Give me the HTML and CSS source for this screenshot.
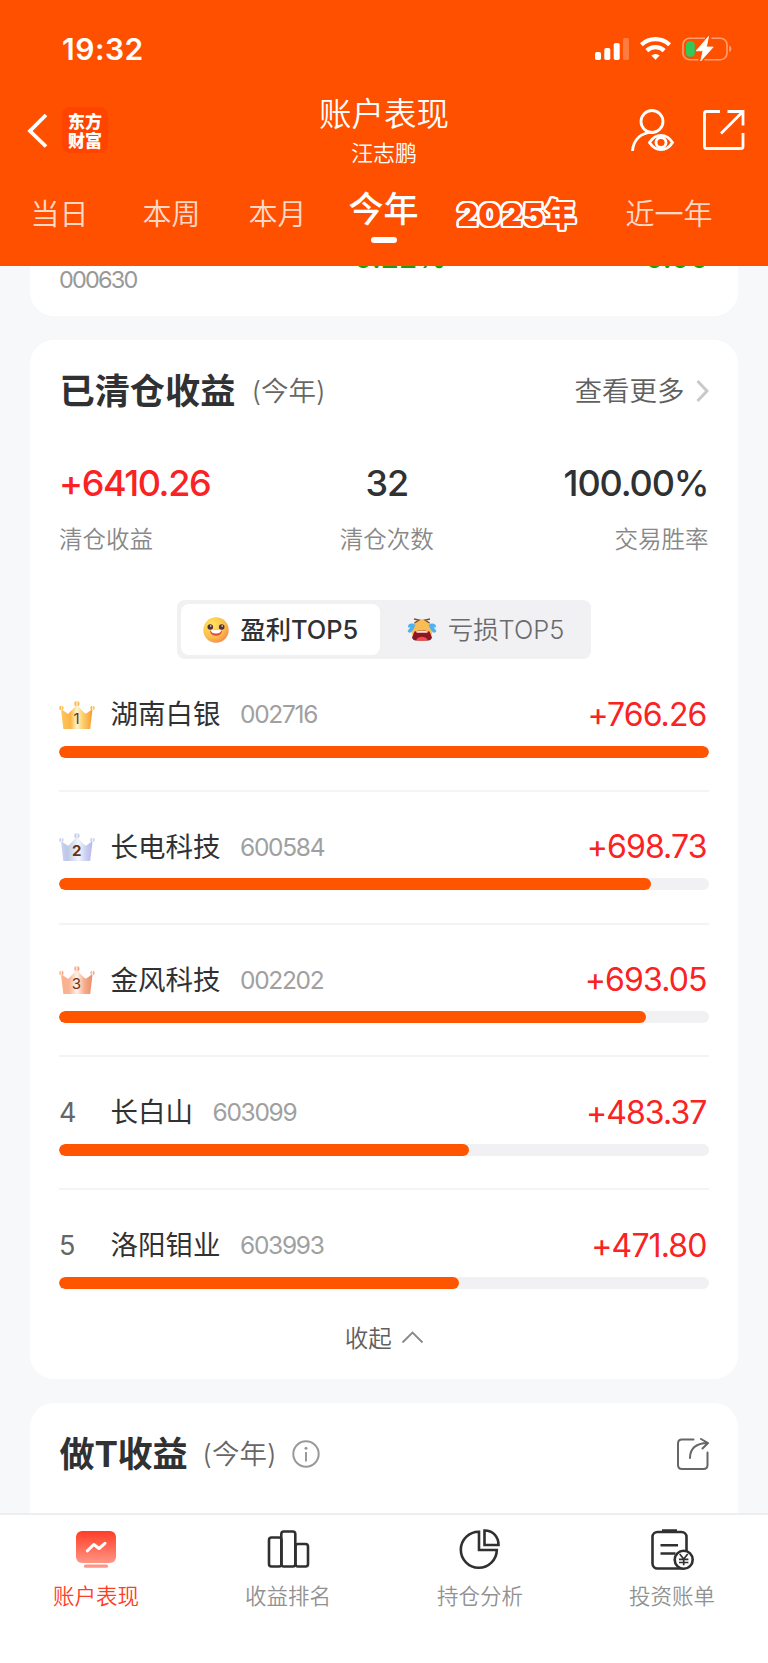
FILE: index.html
```html
<!DOCTYPE html>
<html lang="zh-CN">
<head>
<meta charset="utf-8">
<title>账户表现</title>
<link rel="stylesheet" href="styles.css">
</head>
<body>
<div class="screen">
  <header class="header">
    <div class="status">
      <span class="clock">19:32</span>
      <svg class="status-icons" width="140" height="30" viewBox="592 34 140 30">
        <g fill="#fff">
          <rect x="595" y="52" width="6" height="8" rx="1.8"/>
          <rect x="604.3" y="48" width="6" height="12" rx="1.8"/>
          <rect x="613.7" y="43" width="6" height="17" rx="1.8"/>
          <rect x="623" y="38" width="6" height="22" rx="1.8" opacity=".25"/>
          <path d="M655.500 59.800l-4.200-4.200a6.300 6.300 0 0 1 8.400 0z"/>
        </g>
        <g fill="none" stroke="#fff" stroke-width="4.200">
          <path d="M641.400 44.700a20.500 20.500 0 0 1 28.200 0"/>
          <path d="M646.800 50.600a12.800 12.800 0 0 1 17.400 0"/>
        </g>
        <path d="M705 38.200h-15.500a6.500 6.500 0 0 0-6.500 6.500v8.500a6.500 6.500 0 0 0 6.500 6.500h9M711.500 38.200h9a6.500 6.500 0 0 1 6.500 6.500v8.500a6.500 6.500 0 0 1-6.500 6.500h-16" fill="none" stroke="#fff" stroke-opacity=".45" stroke-width="1.600"/>
        <path d="M729.300 45.300a4 4 0 0 1 0 7z" fill="#fff" fill-opacity=".5"/>
        <rect x="686" y="41.300" width="8.800" height="15.400" rx="4" fill="#34c759"/>
        <path d="M708.500 36.500l-12.300 14.300h6.800l-2.300 10.200 12.500-14h-6.800z" fill="#fff" stroke="#fff" stroke-width=".8" stroke-linejoin="round"/>
      </svg>
    </div>
    <div class="nav">
      <svg class="back" width="24" height="40" viewBox="0 0 24 40"><path d="M21 4L5 20l16 15.500" fill="none" stroke="#fff" stroke-width="3.800"/></svg>
      <div class="logo">东方<br>财富</div>
      <div class="heading">
        <h1>账户表现</h1>
        <p>汪志鹏</p>
      </div>
      <svg class="nav-icons" width="116" height="46" viewBox="630 106 116 46" fill="none" stroke="#fff" stroke-width="2.800">
        <circle cx="652" cy="121.500" r="11"/>
        <path d="M632.500 151c1-12 9-18.500 19.500-18.700"/>
        <path d="M649.500 142.500c6-9.500 17-9.500 23 0c-6 9.500-17 9.500-23 0z"/>
        <circle cx="661" cy="142.500" r="5"/>
        <path d="M720.500 111.500h-13.500q-2 0-2 2v33q0 2 2 2h34.500q2 0 2-2v-13.500M728 111.500h15.500v14M743 112l-21.500 21.500" transform="translate(-.5 0)"/>
      </svg>
    </div>
    <nav class="periods">
      <span class="p1">当日</span>
      <span class="p2">本周</span>
      <span class="p3">本月</span>
      <span class="p4 on">今年</span>
      <span class="p5 outlined">2025年</span>
      <span class="p6">近一年</span>
    </nav>
  </header>

  <main class="content">
    <section class="card holding">
      <span class="holding-rate">-0.22%</span>
      <span class="holding-price">0.00</span>
      <span class="holding-code">000630</span>
    </section>

    <section class="card cleared">
      <div class="card-head">
        <h2>已清仓收益</h2><span class="range">(今年)</span>
        <span class="more">查看更多</span>
        <svg width="13" height="24" viewBox="0 0 13 24"><path d="M1.500 2l9.500 10-9.500 10" fill="none" stroke="#c9c9c9" stroke-width="3"/></svg>
      </div>
      <div class="stats">
        <div><b class="up">+6410.26</b><span>清仓收益</span></div>
        <div class="mid"><b>32</b><span>清仓次数</span></div>
        <div class="end"><b>100.00%</b><span>交易胜率</span></div>
      </div>
      <div class="toggle">
        <div class="opt active">
          <svg width="26" height="26" viewBox="0 0 26 26">
            <defs><radialGradient id="face" cx=".35" cy=".3" r=".8"><stop offset="0" stop-color="#ffe65c"/><stop offset=".6" stop-color="#fcc04a"/><stop offset="1" stop-color="#f4824c"/></radialGradient></defs>
            <circle cx="13" cy="13" r="12.700" fill="url(#face)"/>
            <circle cx="7.300" cy="10" r="2.800" fill="#54303a"/><circle cx="18.700" cy="10" r="2.800" fill="#54303a"/>
            <circle cx="7.800" cy="9" r=".8" fill="#fff"/><circle cx="19.200" cy="9" r=".8" fill="#fff"/>
            <path d="M7 13.500h12c0 7-12 7-12 0z" fill="#e8503a"/><path d="M7.500 13h11q-1 3.500-5.500 3.500t-5.500-3.500z" fill="#fff"/>
          </svg>
          <span>盈利TOP5</span>
        </div>
        <div class="opt">
          <svg width="30" height="26" viewBox="0 0 30 26">
            <circle cx="15" cy="13" r="10.700" fill="#f9bd55"/>
            <path d="M7.500 14.500q7.500-2 15 0l2.500 6q-1 3-3.500 3h-13q-2.500 0-3.500-3z" fill="#8e1524"/>
            <path d="M9.500 22q5.500-4.500 11 0l-.5 1.500h-10z" fill="#f04b4b"/><path d="M9 14.300q6-1.300 12 0l-.7 1.400H9.700z" fill="#ffe9d9"/>
            <path d="M7 2l5 1-4.500 3M23 2l-5 1 4.500 3" fill="none" stroke="#7d4a3a" stroke-width="1.300"/>
            <path d="M8.500 8C5 5 .5 6.500 1 10.500l2.500-.3L.5 14q1.500 3 3.800 1Q7 12 8.500 8zM21.500 8C25 5 29.500 6.500 29 10.500l-2.500-.3L29.500 14q-1.500 3-3.800 1Q23 12 21.500 8z" fill="#4fb0f2"/>
          </svg>
          <span>亏损TOP5</span>
        </div>
      </div>
      <svg class="defs" width="0" height="0">
        <defs>
          <linearGradient id="gold"><stop offset="0" stop-color="#ffc65e"/><stop offset=".3" stop-color="#fbb645"/><stop offset=".5" stop-color="#fff3cf"/><stop offset=".7" stop-color="#fdcf66"/><stop offset="1" stop-color="#f49b37"/></linearGradient>
          <linearGradient id="silver"><stop offset="0" stop-color="#ccd3f2"/><stop offset=".2" stop-color="#bcc7e6"/><stop offset=".55" stop-color="#f3f5fd"/><stop offset=".8" stop-color="#c9cef0"/><stop offset="1" stop-color="#b3b8ee"/></linearGradient>
          <linearGradient id="bronze"><stop offset="0" stop-color="#fbb08c"/><stop offset=".25" stop-color="#f7b494"/><stop offset=".5" stop-color="#fff0e8"/><stop offset=".75" stop-color="#f6ab88"/><stop offset="1" stop-color="#e98c6b"/></linearGradient>
          <g id="crown"><path d="M2 8l6.500 4.500q1 .4 1.500-.4L17.800 4l7.700 8.100q.8.800 1.700.3L33.600 8l-2.400 20H4.300z"/><circle cx="17.800" cy="2.700" r="2.600"/><circle cx="2.300" cy="7" r="2.200"/><circle cx="33.400" cy="7" r="2.200"/></g>
        </defs>
      </svg>
      <ol class="rank">
        <li>
          <div class="line"><svg width="36" height="28" viewBox="0 0 36 28"><use href="#crown" fill="url(#gold)"/><text x="17.500" y="23">1</text></svg><span class="name">湖南白银</span><span class="code">002716</span><span class="gain">+766.26</span></div>
          <div class="track"><i style="width:100%"></i></div>
        </li>
        <li>
          <div class="line"><svg width="36" height="28" viewBox="0 0 36 28"><use href="#crown" fill="url(#silver)"/><text class="bold" x="17.800" y="23">2</text></svg><span class="name">长电科技</span><span class="code">600584</span><span class="gain">+698.73</span></div>
          <div class="track"><i style="width:91.19%"></i></div>
        </li>
        <li>
          <div class="line"><svg width="36" height="28" viewBox="0 0 36 28"><use href="#crown" fill="url(#bronze)"/><text x="17.500" y="23">3</text></svg><span class="name">金风科技</span><span class="code">002202</span><span class="gain">+693.05</span></div>
          <div class="track"><i style="width:90.45%"></i></div>
        </li>
        <li>
          <div class="line"><span class="num">4</span><span class="name">长白山</span><span class="code">603099</span><span class="gain">+483.37</span></div>
          <div class="track"><i style="width:63.08%"></i></div>
        </li>
        <li>
          <div class="line"><span class="num">5</span><span class="name">洛阳钼业</span><span class="code">603993</span><span class="gain">+471.80</span></div>
          <div class="track"><i style="width:61.57%"></i></div>
        </li>
      </ol>
      <div class="collapse"><span>收起</span><svg width="23" height="14" viewBox="0 0 23 14"><path d="M1.500 12.500l10-10 10 10" fill="none" stroke="#888" stroke-width="1.800"/></svg></div>
    </section>

    <section class="card trade">
      <div class="card-head">
        <h2>做T收益</h2><span class="range">(今年)</span>
        <svg class="info" width="28" height="28" viewBox="0 0 28 28" fill="none" stroke="#999" stroke-width="2"><circle cx="14" cy="14" r="12.700"/><path d="M14 12v9.500"/><circle cx="14" cy="8.200" r="1.500" fill="#999" stroke="none"/></svg>
        <svg class="share" width="33" height="33" viewBox="676 1438 33 33" fill="none" stroke="#666" stroke-width="2" stroke-linecap="round"><path d="M693.500 1439.500h-11.500q-4 0-4 4v21.500q0 4 4 4h21.500q4 0 4-4v-12.500"/><path d="M690 1458q0-14.500 17.500-15M701 1439l7 4-5.500 5.500"/></svg>
      </div>
    </section>
  </main>

  <footer class="tabbar">
    <div class="tab current">
      <svg width="44" height="44" viewBox="74 1528 44 44">
        <defs><linearGradient id="scr" x2="0" y2="1"><stop offset="0" stop-color="#ff3d26"/><stop offset="1" stop-color="#ff9585"/></linearGradient></defs>
        <rect x="76" y="1531" width="40" height="32" rx="6" fill="url(#scr)"/><rect x="84" y="1564.500" width="24" height="3.300" rx="1.600" fill="#ff9585"/>
        <path d="M87.300 1550.800l6.500-6.300 5.200 4 6-5.200" fill="none" stroke="#fff" stroke-width="3" stroke-linecap="round" stroke-linejoin="round"/>
      </svg>
      <span>账户表现</span>
    </div>
    <div class="tab">
      <svg width="44" height="44" viewBox="266 1528 44 44" fill="none" stroke="#303030" stroke-width="2.600">
        <rect x="269" y="1537.500" width="12.500" height="29" rx="2.500"/><rect x="281.300" y="1531.500" width="14" height="35" rx="2.500"/><rect x="295.500" y="1544" width="12.500" height="22.500" rx="2.500"/>
      </svg>
      <span>收益排名</span>
    </div>
    <div class="tab">
      <svg width="44" height="44" viewBox="458 1528 44 44" fill="none" stroke="#303030" stroke-width="2.600">
        <path d="M479 1531.800a18 18 0 1 0 17.800 18.200h-17.800z"/><path d="M484.500 1530.500v14.500h14c0-8.500-5.500-14.500-14-14.500z"/>
      </svg>
      <span>持仓分析</span>
    </div>
    <div class="tab">
      <svg width="44" height="44" viewBox="650 1528 44 44" fill="none" stroke="#303030" stroke-width="2.600">
        <rect x="652.500" y="1532" width="34" height="36.500" rx="5"/><path d="M662 1530.500h15M660.500 1545.300h17.500M660.500 1553.500h15"/>
        <circle cx="683.700" cy="1559.700" r="9" fill="#fff"/><path d="M679.700 1554l4 5 4-5M683.700 1559v6.300M679 1559.300h9.400M679 1562.500h9.400" stroke-width="1.700"/>
      </svg>
      <span>投资账单</span>
    </div>
  </footer>
</div>
</body>
</html>
```
FILE: styles.css
```css
* { box-sizing: border-box; margin: 0; padding: 0; }
body { font-family: Inter, "Noto Sans CJK SC", sans-serif; color: #303133; background: #f7f8fa; }
svg { display: block; flex: none; }
.screen { width: 768px; height: 1663px; display: flex; flex-direction: column; overflow: hidden; }

.header { height: 266px; flex: none; background: #ff5000; color: #fff; position: relative; z-index: 1; }
.status { height: 94px; padding: 34px 36px 0 62px; display: flex; justify-content: space-between; }
.clock { font-size: 30px; line-height: 30px; font-weight: 600; letter-spacing: .5px; }
.nav { height: 84px; display: flex; padding-left: 25px; }
.back { margin: 17px 13px 0 0; }
.logo { width: 46px; height: 46px; margin-top: 13px; padding-top: 4px; border-radius: 8px; background: #ff4400; text-align: center; font-family: "Noto Sans CJK SC", sans-serif; font-weight: 900; font-size: 17px; line-height: 19px; }
.heading { width: 200px; margin-left: 176px; text-align: center; }
.heading h1 { font-size: 32.500px; line-height: 42px; font-weight: 350; }
.heading p { font-size: 22px; line-height: 35px; font-weight: 350; }
.nav-icons { margin: 12px 0 0 146px; }
.periods { height: 88px; display: flex; align-items: flex-start; padding-left: 30.500px; font-size: 29px; line-height: 73px; font-weight: 350; white-space: nowrap; }
.periods span { color: rgba(255, 255, 255, .8); flex: none; }
.periods .p1 { width: 112px; }
.periods .p2 { width: 106px; }
.periods .p3 { width: 100px; }
.periods .p4 { width: 109px; }
.periods .p5 { width: 168px; }
.periods .on { color: #fff; font-size: 35px; line-height: 62px; font-weight: 500; }
.periods .on::after { content: ""; display: block; width: 26px; height: 6px; border-radius: 3px; background: #fff; margin: -3px 0 0 22px; }
.periods .outlined {
  color: #ff4a00; font-weight: 900; font-size: 31.500px; letter-spacing: .7px;
  text-shadow: 2.400px 0 #fff, -2.400px 0 #fff, 0 2.400px #fff, 0 -2.400px #fff,
    1.700px 1.700px #fff, -1.700px 1.700px #fff, 1.700px -1.700px #fff, -1.700px -1.700px #fff,
    2.200px .9px #fff, -2.200px .9px #fff, 2.200px -.9px #fff, -2.200px -.9px #fff,
    .9px 2.200px #fff, -.9px 2.200px #fff, .9px -2.200px #fff, -.9px -2.200px #fff;
}

.content { flex: 1; min-height: 0; overflow: hidden; margin-top: -40px; padding: 0 30px; display: flex; flex-direction: column; gap: 24px; }
.card { background: #fff; border-radius: 24px; padding: 0 29.500px 0 29px; flex: none; }
.holding { height: 90px; border-radius: 0 0 24px 24px; display: grid; grid-template-columns: 1fr 1fr; align-content: start; padding-top: 13px; }
.holding-rate, .holding-price { line-height: 36px; color: #19a10b; font-weight: 500; font-size: 29.500px; }
.holding-rate { padding-left: 281px; white-space: nowrap; width: 400px; }
.holding-price { text-align: right; letter-spacing: -.2px; }
.holding-code { font-size: 23.500px; line-height: 36px; margin-top: -13px; font-weight: 400; color: #999; letter-spacing: -1.800px; }

.cleared { height: 1039px; }
.card-head { height: 102px; display: flex; align-items: center; }
.card-head h2 { font-size: 35.200px; font-weight: 700; line-height: 50px; padding-left: .5px; }
.range { font-size: 27.500px; font-weight: 350; color: #666; margin-left: 16px; line-height: 40px; }
.more { margin-left: auto; margin-right: 11px; font-size: 27.500px; font-weight: 350; color: #606060; line-height: 40px; }
.stats { height: 158px; display: grid; grid-template-columns: 1fr 1fr 1fr; padding-top: 16px; }
.stats div { display: flex; flex-direction: column; }
.stats .mid { align-items: center; padding-left: 6px; }
.stats .end { align-items: flex-end; }
.stats b { font-size: 36px; line-height: 50px; font-weight: 500; letter-spacing: -1.100px; }
.stats .up { color: #fa2222; letter-spacing: -1.400px; }
.stats span { font-size: 23.500px; line-height: 40px; margin-top: 12px; font-weight: 350; color: #888; }
.toggle { width: 414px; height: 59px; margin: 0 auto; background: #f1f1f4; border-radius: 8px; padding: 4px; display: flex; }
.opt { flex: 1; display: flex; align-items: center; gap: 11px; padding-left: 27px; font-size: 25.400px; line-height: 36px; font-weight: 350; color: #6a6b6e; border-radius: 8px; }
.opt.active { flex: none; width: 199px; padding-left: 22.500px; background: #fff; color: #303133; font-weight: 500; }
.defs { position: absolute; }
.rank { list-style: none; }
.rank li { height: 132.750px; padding-top: 34.500px; border-bottom: 2px solid #f4f4f6; }
.rank li:last-child { border: 0; height: 131px; }
.line { height: 42px; display: flex; align-items: center; line-height: 42px; }
.line text { font: 400 15px Inter, sans-serif; fill: #6b3020; text-anchor: middle; }
.line text.bold { font-weight: 700; }
.num { width: 36px; font-size: 27px; font-weight: 400; color: #666; }
.name { margin: -1px 0 0 15.500px; font-size: 27.500px; }
.code { margin: -1px 0 0 19.500px; font-size: 24.500px; font-weight: 400; color: #a0a0a0; letter-spacing: -1.300px; }
.gain { margin: 0 2px 0 auto; font-size: 32px; font-weight: 400; color: #fa2222; letter-spacing: -.9px; }
.track { height: 12px; margin-top: 10px; background: #f1f1f4; border-radius: 6px; overflow: hidden; }
.track i { display: block; height: 12px; border-radius: 6px; background: #ff5500; }
.collapse { display: flex; align-items: center; justify-content: center; gap: 9px; height: 32px; font-size: 23.500px; font-weight: 350; color: #606060; padding-left: 1px; }
.trade { height: 300px; }
.trade h2 { letter-spacing: -.3px; }
.trade .range { margin-left: 15px; }
.info { margin-left: 15px; }
.share { margin-left: auto; }

.tabbar { height: 150px; flex: none; background: #fff; border-top: 2px solid #eeeeef; display: grid; grid-template-columns: repeat(4, 1fr); position: relative; }
.tab { display: flex; flex-direction: column; align-items: center; padding-top: 13px; font-size: 21.500px; font-weight: 350; color: #929292; }
.tab span { line-height: 30px; margin-top: 9px; }
.tab.current { color: #ff3d26; }
```
